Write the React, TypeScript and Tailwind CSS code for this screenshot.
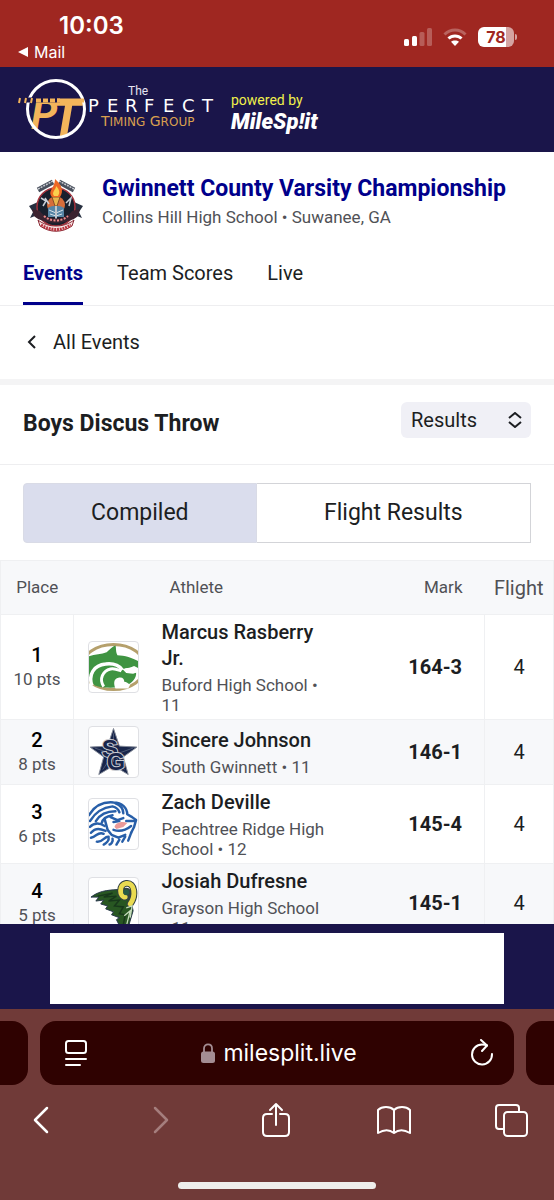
import { useState } from 'react';
import type { ReactNode } from 'react';

type Result = {
  place: number;
  pts: number;
  athlete: string;
  school: string;
  grade: number;
  mark: string;
  flight: number;
  logo: ReactNode;
};

const WolvesLogo = () => (
  <svg viewBox="0 0 50 50" className="size-full" aria-hidden="true">
    <ellipse cx="25" cy="25" rx="32" ry="23" fill="#fff" stroke="#b5a06c" strokeWidth="3" />
    <path d="M0 14C6 12 13 12 18 10C21 7 24 4 27 3C28 6 27 9 29 13C36 13 45 16 50 19V26C46 26 40 25 36 27C37 31 48 32 48 30C49 36 44 41 38 44C30 47 14 47 6 44C4 42 2 40 0 35Z" fill="#3f9442" />
    <path d="M3 44C-1 33 5 23 17 22C25 21 31 24 34 28" fill="none" stroke="#fff" strokeWidth="3.5" />
    <path d="M15 45C10 37 14 29 22 27C26 26 30 28 33 29" fill="none" stroke="#fff" strokeWidth="3" />
    <path d="M27 47C25 42 25 37 30 36C34 35 36 37 36 40C38 40 40 42 42 43L40 47Z" fill="#fff" />
    <path d="M34 27L41 26L46 24L50 26V30L45 32L38 31Z" fill="#fff" />
  </svg>
);

const StarLogo = () => (
  <svg viewBox="0 0 50 50" className="size-full" aria-hidden="true">
    <path d="M25 1L31 19L49 20L35 30L40 48L25 39L10 48L15 30L1 20L19 19Z" fill="#18254a" stroke="#858b99" strokeWidth="1" />
    <path d="M25 6V35M45 21L28 27M6 21L21 26M14 43L22 31M36 43L28 31" stroke="#4b5875" strokeWidth="1" />
    <text fontFamily="Liberation Sans" fontWeight="700" fill="#18254a" stroke="#c9ccd2" strokeWidth="2" paintOrder="stroke">
      <tspan x="13" y="30" fontSize="25">S</tspan>
      <tspan x="18" y="43" fontSize="24">G</tspan>
    </text>
  </svg>
);

const LionLogo = () => (
  <svg viewBox="0 0 50 50" className="size-full" aria-hidden="true">
    <g fill="none" stroke="#285fa9" strokeWidth="2.5" strokeLinecap="round" strokeLinejoin="round">
      <path d="M0 16C6 6 14 2 25 3C34 3 39 9 39 15L44 18L48 21L46 28L43 34" />
      <path d="M1 22C7 12 15 8 24 7C28 8 30 10 31 13M27 4C32 6 35 10 35 14" />
      <path d="M7 22C12 14 19 12 27 12M13 24C14 19 18 17 24 16M1 28C6 23 11 24 16 27" />
      <path d="M2 34C7 28 12 30 17 32M2 39C8 38 9 32 15 35M8 43C14 44 16 37 20 38C21 42 17 45 15 46" />
      <path d="M16 20L19 31L23 36L30 39L37 36M24 40C25 43 22 46 21 46M31 41L28 46M37 38L34 43M43 34L40 42" />
      <path d="M22 18L29 21L35 19M25 23L31 22M38 22L46 22M25 31C31 33 38 31 43 27" />
    </g>
    <path d="M26 28C27 23 35 22 39 24L35 28L28 30Z" fill="#eb9a98" />
  </svg>
);

const RamLogo = () => (
  <svg viewBox="0 0 50 50" className="size-full" aria-hidden="true">
    <path d="M2 19C12 11 24 12 32 11L43 23L45 33L40 50H32L28 42L31 40L23 37L25 34L17 31L19 28L12 26L15 22L7 23L10 19Z" fill="#285722" stroke="#27364a" strokeWidth="1" />
    <path d="M9 18L24 15L15 19L28 18L20 23L31 22L26 28L35 29L31 36L37 37L35 47" fill="none" stroke="#18381b" strokeWidth="1.5" />
    <path d="M42 26C48 18 47 4 38 5C30 6 31 19 37 19C41 18 41 13 38 13" fill="none" stroke="#354242" strokeWidth="7" strokeLinecap="round" />
    <path d="M42 26C48 18 47 4 38 5C30 6 31 19 37 19" fill="none" stroke="#eadb51" strokeWidth="5" strokeLinecap="round" />
    <circle cx="38" cy="14" r="3" fill="#285b45" />
    <path d="M38 30L44 28L42 40M36 38L42 33L38 49" fill="none" stroke="#c7ddbd" strokeWidth="1.3" />
  </svg>
);

const results: Result[] = [
  { place: 1, pts: 10, athlete: 'Marcus Rasberry Jr.', school: 'Buford High School', grade: 11, mark: '164-3', flight: 4, logo: <WolvesLogo /> },
  { place: 2, pts: 8, athlete: 'Sincere Johnson', school: 'South Gwinnett', grade: 11, mark: '146-1', flight: 4, logo: <StarLogo /> },
  { place: 3, pts: 6, athlete: 'Zach Deville', school: 'Peachtree Ridge High School', grade: 12, mark: '145-4', flight: 4, logo: <LionLogo /> },
  { place: 4, pts: 5, athlete: 'Josiah Dufresne', school: 'Grayson High School', grade: 11, mark: '145-1', flight: 4, logo: <RamLogo /> },
];

const StatusBar = () => (
  <div className="flex h-[67px] shrink-0 items-start justify-between bg-[#9f2721] pl-[18px] pr-[37px] text-white">
    <div className="flex flex-col pt-3">
      <span className="pl-[41px] font-['Inter'] text-2xl leading-7 font-semibold">10:03</span>
      <a href="#mail" className="flex items-center gap-1.5 text-base leading-6">
        <svg viewBox="0 0 10 10" className="size-2.5" fill="currentColor" aria-hidden="true"><path d="M0 5L10 0V10Z" /></svg>
        <span className="font-['Inter']">Mail</span>
      </a>
    </div>
    <div className="flex items-center gap-[11px] pt-[27px]">
      <svg viewBox="0 0 28 18" className="h-[18px] w-7" fill="#fff" aria-hidden="true">
        <rect x="0" y="11" width="5" height="7" rx="1.5" />
        <rect x="8" y="8" width="5" height="10" rx="1.5" />
        <rect x="15.500" y="4" width="5" height="14" rx="1.500" opacity=".25" />
        <rect x="23" y="0" width="5" height="18" rx="1.500" opacity=".25" />
      </svg>
      <svg viewBox="0 0 24 18" className="h-[18px] w-6" fill="none" stroke="#fff" strokeWidth="3" aria-hidden="true">
        <path d="M1.500 6.500C7.500 .5 16.500 .5 22.500 6.500" opacity=".28" />
        <path d="M5.500 10.500C9 7 15 7 18.500 10.500" />
        <path d="M12 18L8 13.800C10 12 14 12 16 13.800Z" fill="#fff" stroke="none" />
      </svg>
      <div className="flex items-center gap-px">
        <div className="flex h-5 w-9 items-center justify-center rounded-md bg-linear-to-r from-white from-78% to-[#d5a3a1] to-78% font-['Inter'] text-base leading-5 font-bold text-[#9f2721]">78</div>
        <div className="h-1.5 w-0.5 rounded-r-full bg-[#d5a3a1]" />
      </div>
    </div>
  </div>
);

const SiteHeader = () => (
  <header className="flex h-[85px] shrink-0 items-center bg-[#1a154a] pl-[18px]">
    <svg viewBox="0 0 200 66" className="h-[66px] w-[200px] shrink-0 overflow-visible" role="img" aria-label="The Perfect Timing Group">
      <text fontFamily="Roboto" fontStyle="italic" fontWeight="700" fill="#f3b55b">
        <tspan x="13" y="52" fontSize="42">P</tspan>
        <tspan x="33" y="59" fontSize="50">T</tspan>
      </text>
      <circle cx="38" cy="32" r="28.500" fill="none" stroke="#fff" strokeWidth="3" />
      <path d="M6 23H42" stroke="#1a154a" strokeWidth="5" />
      <path d="M1 26L2 21M7 26L8 21M13 26L14 21" stroke="#f3b55b" strokeWidth="2" />
      <path d="M18 23.500H42" stroke="#f3b55b" strokeWidth="4" strokeDasharray="5 2" />
      <path d="M39 23.500H66" stroke="#f3b55b" strokeWidth="4" />
      <text x="110" y="18" fontFamily="Roboto" fontSize="12" fill="#e6e4f2">The</text>
      <text x="70 89 107 126 145 164 184" y="35" fontFamily="DejaVu Sans" fontSize="18" fill="#fff">PERFECT</text>
      <text x="83" y="49" fontFamily="DejaVu Sans" fontSize="14" fill="#d9a04f">T<tspan fontSize="12">IMING</tspan> G<tspan fontSize="12">ROUP</tspan></text>
    </svg>
    <div className="flex flex-col pt-1 pl-[13px]">
      <span className="text-sm leading-5 text-[#f1f04b]">powered by</span>
      <span className="text-[22px] leading-6 font-black text-white italic">MileSp!it</span>
    </div>
  </header>
);

const MeetLogo = () => (
  <svg viewBox="0 0 56 56" className="size-14 shrink-0" aria-hidden="true">
    <path d="M1 28L10 24L12 36L2 40L5 34ZM55 28L46 24L44 36L54 40L51 34Z" fill="#283040" />
    <circle cx="28" cy="29" r="19" fill="#19202d" stroke="#a5323c" strokeWidth="1.500" />
    <path d="M10 12L25 4M46 12L31 4" stroke="#49505d" strokeWidth="5" />
    <path d="M10 11L25 3M46 11L31 3" stroke="#c9cbd0" strokeWidth="1.500" strokeDasharray="2 1" />
    <circle cx="28" cy="27" r="9" fill="#d56d3b" />
    <path d="M20 30C24 27 32 27 36 30V39H20Z" fill="#5685a5" />
    <path d="M21 32L28 35L35 32M22 36L28 38L34 36" fill="none" stroke="#d6e2e8" />
    <path d="M13 20L18 23L15 28M38 25L43 20L41 28M17 20L21 26" fill="none" stroke="#cbd0d8" strokeWidth="1.500" />
    <path d="M24 19H32L29 28H27Z" fill="#e9b64c" stroke="#603420" strokeWidth=".7" />
    <path d="M27 28H29V44H27Z" fill="#bfc5cc" />
    <path d="M24 19C19 13 27 10 27 1C34 7 36 13 32 19Z" fill="#ed6724" />
    <path d="M26 18C23 14 28 12 28 8C32 12 32 15 30 18Z" fill="#fbd04d" />
    <path d="M4 31L12 33C18 43 38 43 44 33L52 31L50 38C41 47 15 47 6 38Z" fill="#3b2330" />
    <path d="M16 38C23 44 33 44 40 38" fill="none" stroke="#ef8b8b" strokeWidth="2" strokeDasharray="2 1.500" />
    <path d="M10 42C20 50 36 50 46 42L44 48C34 55 22 55 12 48Z" fill="#f6e4e4" stroke="#8a2934" />
    <path d="M13 47C23 53 33 53 43 47" fill="none" stroke="#b93540" strokeWidth="3" strokeDasharray="2 .8" />
  </svg>
);

const BrowserBar = () => (
  <footer className="flex h-[191px] shrink-0 flex-col items-center justify-between bg-[#703a38] pt-3 pb-[11px] text-white">
    <div className="flex w-full flex-col gap-[17px]">
      <div className="flex h-16 items-stretch gap-3">
        <div className="w-7 shrink-0 rounded-r-2xl bg-[#2f0201]" />
        <div className="flex flex-1 items-center justify-between rounded-2xl bg-[#2f0201] pr-5 pl-6">
          <button type="button" aria-label="Page settings">
            <svg viewBox="0 0 24 28" className="h-7 w-6" fill="none" stroke="currentColor" strokeWidth="2" strokeLinecap="round">
              <rect x="2" y="2" width="20" height="12" rx="2.500" />
              <path d="M2 20H22M2 26H16" />
            </svg>
          </button>
          <div className="flex items-center gap-2">
            <svg viewBox="0 0 14 20" className="h-5 w-3.5" aria-hidden="true">
              <path d="M3 9V5.500C3 0 11 0 11 5.500V9" fill="none" stroke="#a48d93" strokeWidth="1.800" />
              <rect x="0" y="8.500" width="14" height="11.500" rx="2.500" fill="#a48d93" />
            </svg>
            <span className="font-['Inter'] text-[23px] leading-8">milesplit.live</span>
          </div>
          <button type="button" aria-label="Reload">
            <svg viewBox="0 0 24 28" className="h-7 w-6" fill="none" stroke="currentColor" strokeWidth="2" strokeLinecap="round" strokeLinejoin="round">
              <path d="M22 15A10 10 0 1 1 12 5.500C14 5.500 16 6 17 6.500" />
              <path d="M11 1L17 6.500L12 12" />
            </svg>
          </button>
        </div>
        <div className="w-7 shrink-0 rounded-l-2xl bg-[#2f0201]" />
      </div>
      <nav className="flex items-center justify-between pr-[25px] pl-[23px]">
        <button type="button" aria-label="Back" className="flex w-9 justify-center">
          <svg viewBox="0 0 20 36" className="h-9 w-5" fill="none" stroke="currentColor" strokeWidth="2.500" strokeLinecap="round" strokeLinejoin="round"><path d="M16 6L4 18L16 30" /></svg>
        </button>
        <button type="button" aria-label="Forward" className="flex w-9 justify-center text-[#a57e7d]" disabled>
          <svg viewBox="0 0 20 36" className="h-9 w-5" fill="none" stroke="currentColor" strokeWidth="2.500" strokeLinecap="round" strokeLinejoin="round"><path d="M6 6L18 18L6 30" /></svg>
        </button>
        <button type="button" aria-label="Share" className="flex w-9 justify-center">
          <svg viewBox="0 0 30 36" className="h-9 w-[30px]" fill="none" stroke="currentColor" strokeWidth="2" strokeLinecap="round" strokeLinejoin="round">
            <path d="M11 12H6Q2 12 2 16V30Q2 34 6 34H24Q28 34 28 30V16Q28 12 24 12H19M15 23V2M9 8L15 2L21 8" />
          </svg>
        </button>
        <button type="button" aria-label="Bookmarks" className="flex w-9 justify-center">
          <svg viewBox="0 0 36 36" className="size-9" fill="none" stroke="currentColor" strokeWidth="2" strokeLinejoin="round">
            <path d="M18 8C14 4 6 4 2 8V31C7 28 13 27 18 31C23 27 29 28 34 31V8C30 4 22 4 18 8V31" />
          </svg>
        </button>
        <button type="button" aria-label="Tabs" className="flex w-9 justify-center">
          <svg viewBox="0 0 34 36" className="h-9 w-[34px]" fill="none" stroke="currentColor" strokeWidth="2" strokeLinejoin="round">
            <rect x="10" y="10" width="23" height="24" rx="3.500" />
            <path d="M9 27H5Q2 27 2 24V6Q2 3 5 3H22Q25 3 25 6V9" />
          </svg>
        </button>
      </nav>
    </div>
    <div className="h-[7px] w-[198px] rounded-full bg-[#eeeeec]" />
  </footer>
);

export default function App() {
  const [view, setView] = useState<string>('compiled');

  return (
    <div className="flex h-screen flex-col bg-white font-['Roboto',sans-serif] text-[#1c1e22]">
      <StatusBar />
      <SiteHeader />

      <main className="flex min-h-0 flex-1 flex-col overflow-hidden">
        <div className="flex shrink-0 items-end gap-[18px] px-7 pt-5">
          <MeetLogo />
          <div className="pt-px pb-[5px]">
            <h1 className="text-[23px] leading-8 font-bold text-[#00008b]">Gwinnett County Varsity Championship</h1>
            <p className="text-[17px] leading-6 text-[#505156]">Collins Hill High School • Suwanee, GA</p>
          </div>
        </div>

        <nav className="flex shrink-0 gap-[34px] border-b border-[#eeeef0] px-[23px] pt-[23px] text-xl leading-8">
          <a href="#events" className="border-b-3 border-[#00008b] pb-[13px] font-bold text-[#00008b]">Events</a>
          <a href="#scores">Team Scores</a>
          <a href="#live">Live</a>
        </nav>

        <div className="shrink-0 border-b-6 border-[#f4f4f5] px-[26px] pt-5 pb-[21px]">
          <a href="#all" className="flex items-center gap-4 text-xl leading-8">
            <svg viewBox="0 0 11 14" className="h-3.5 w-[11px]" fill="none" stroke="currentColor" strokeWidth="2" aria-hidden="true"><path d="M9 1L3 7L9 13" /></svg>
            All Events
          </a>
        </div>

        <div className="flex shrink-0 items-start justify-between border-b border-[#eeeef0] px-[23px] pt-[17px] pb-6">
          <h2 className="pt-1.5 text-[23px] leading-8 font-bold">Boys Discus Throw</h2>
          <div className="relative flex">
            <select aria-label="Results type" className="h-9 w-[130px] appearance-none rounded-md bg-[#f0f0f6] pl-2.5 text-xl leading-8">
              <option>Results</option>
            </select>
            <svg viewBox="0 0 14 16" className="pointer-events-none absolute top-2.5 right-[9px] h-4 w-3.5" fill="none" stroke="currentColor" strokeWidth="2" aria-hidden="true">
              <path d="M1 6L7 1L13 6M1 10L7 15L13 10" />
            </svg>
          </div>
        </div>

        <div className="flex shrink-0 px-[23px] pt-[18px] pb-[17px] text-[23px]">
          <button
            type="button"
            onClick={() => setView('compiled')}
            aria-pressed={view === 'compiled'}
            className="h-[60px] w-[46%] rounded-l-sm border border-[#d9dbe6] bg-[#dadded]"
          >
            Compiled
          </button>
          <button
            type="button"
            onClick={() => setView('flight')}
            aria-pressed={view === 'flight'}
            className="h-[60px] flex-1 border border-l-0 border-[#d3d4d8] bg-white"
          >
            Flight Results
          </button>
        </div>

        <div className="min-h-0 flex-1 overflow-hidden">
          <table className="w-full table-fixed border-collapse">
            <colgroup>
              <col className="w-[73px]" />
              <col className="w-20" />
              <col />
              <col className="w-[158px]" />
              <col className="w-[69px]" />
            </colgroup>
            <thead>
              <tr className="h-[54px] border border-[#eff0f2] bg-[#f7f8fa] text-[17px] text-[#505156]">
                <th className="font-normal">Place</th>
                <th />
                <th className="pl-4 text-left font-normal">Athlete</th>
                <th className="pr-[22px] text-right font-normal">Mark</th>
                <th className="text-xl font-normal">Flight</th>
              </tr>
            </thead>
            <tbody>
              {results.map((result) => (
                <tr key={result.place} className="border border-[#eff0f2] odd:bg-white even:bg-[#f7f8fa]">
                  <td className="border-r border-[#eff0f2] text-center">
                    <p className="text-xl leading-6 font-medium text-black">{result.place}</p>
                    <p className="text-[17px] leading-6 text-[#505156]">{result.pts} pts</p>
                  </td>
                  <td className="py-1.5 pl-3.5">
                    <div className="h-[52px] w-[51px] overflow-hidden rounded-sm border border-[#dfe0e4] bg-white">{result.logo}</div>
                  </td>
                  <td className="py-1 pl-2">
                    <p className="text-xl leading-[26px] font-medium">{result.athlete}</p>
                    <p className="pt-1 text-[17px] leading-5 text-[#505156]">{result.school} • {result.grade}</p>
                  </td>
                  <td className="border-r border-[#eff0f2] pr-[22px] text-right text-xl font-bold">{result.mark}</td>
                  <td className="text-center text-xl">{result.flight}</td>
                </tr>
              ))}
            </tbody>
          </table>
        </div>
      </main>

      <div className="shrink-0 bg-[#1a154a] px-[50px] pt-[9px] pb-[5px]">
        <div className="h-[71px] bg-white" />
      </div>

      <BrowserBar />
    </div>
  );
}
